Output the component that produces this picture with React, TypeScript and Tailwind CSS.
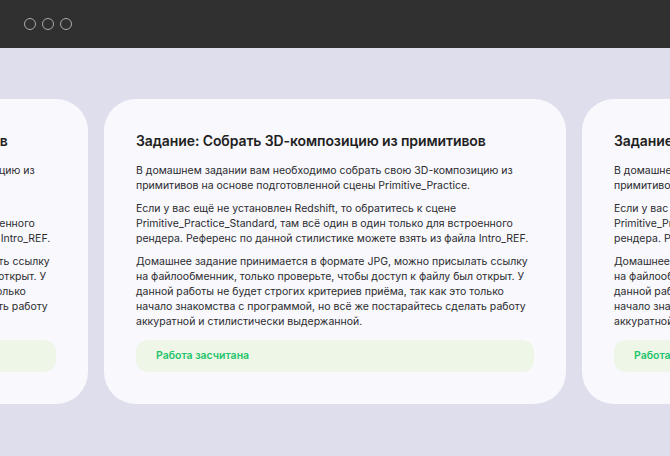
import React from "react";

const P1 = [
  "В домашнем задании вам необходимо собрать свою 3D-композицию из",
  "примитивов на основе подготовленной сцены Primitive_Practice.",
];
const P2 = [
  "Если у вас ещё не установлен Redshift, то обратитесь к сцене",
  "Primitive_Practice_Standard, там всё один в один только для встроенного",
  "рендера. Референс по данной стилистике можете взять из файла Intro_REF.",
];
const P3 = [
  "Домашнее задание принимается в формате JPG, можно присылать ссылку",
  "на файлообменник, только проверьте, чтобы доступ к файлу был открыт. У",
  "данной работы не будет строгих критериев приёма, так как это только",
  "начало знакомства с программой, но всё же постарайтесь сделать работу",
  "аккуратной и стилистически выдержанной.",
];

function Para({ lines, className }: { lines: string[]; className?: string }) {
  return (
    <div className={className}>
      {lines.map((l, i) => (
        <div key={i} className="whitespace-nowrap h-[15px] leading-[15px]">
          {l}
        </div>
      ))}
    </div>
  );
}

function Card() {
  return (
    <div className="w-[462px] shrink-0 rounded-[32px] bg-[#f8f8fd] px-8 pt-8 pb-8">
      <div className="h-5 leading-5 text-[14px] font-semibold text-[#1f1f22] whitespace-nowrap tracking-[-0.1px]">
        Задание: Собрать 3D-композицию из примитивов
      </div>
      <div className="mt-3 text-[10.5px] text-[#2b2b2e]">
        <Para lines={P1} />
        <Para lines={P2} className="mt-2" />
        <Para lines={P3} className="mt-2" />
      </div>
      <div className="mt-[11px] h-8 rounded-[12px] bg-[#eef6e7] px-5 flex items-center">
        <span className="text-[10.5px] font-semibold text-[#1ec46a]">Работа засчитана</span>
      </div>
    </div>
  );
}

export default function App() {
  return (
    <div
      className="w-[670px] h-[456px] overflow-hidden bg-[#dfdeed] flex flex-col"
      style={{ fontFamily: "Inter, 'Noto Sans', sans-serif" }}
    >
      <div className="h-12 bg-[#303030] flex items-center pl-6 gap-1.5 shrink-0">
        <div className="w-3 h-3 rounded-full border-[1.5px] border-[#aaaaaa]" />
        <div className="w-3 h-3 rounded-full border-[1.5px] border-[#aaaaaa]" />
        <div className="w-3 h-3 rounded-full border-[1.5px] border-[#aaaaaa]" />
      </div>
      <div className="pt-[51px] flex justify-center gap-4">
        <Card />
        <Card />
        <Card />
      </div>
    </div>
  );
}
